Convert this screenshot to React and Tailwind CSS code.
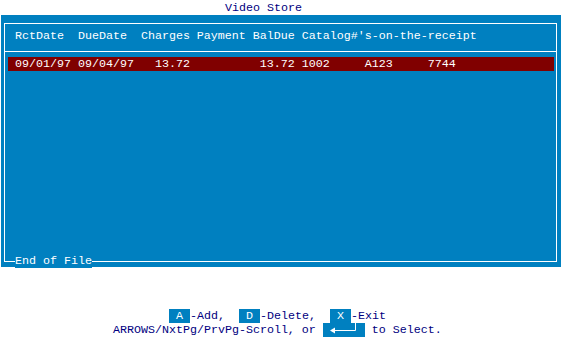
import React from 'react';

const header = "RctDate  DueDate  Charges Payment BalDue Catalog#'s-on-the-receipt";
const rows = [
  { rct: '09/01/97', due: '09/04/97', charges: '13.72', payment: '', balDue: '13.72', catalog: ['1002', 'A123', '7744'] },
];

function fmt(r) {
  const pad = (s, n) => (s + ' '.repeat(n)).slice(0, n);
  const lpad = (s, n) => (' '.repeat(n) + s).slice(-n);
  return (
    r.rct + ' ' + r.due + '   ' + pad(r.charges, 5) + ' ' + pad(r.payment, 9) + lpad(r.balDue, 5) + ' ' +
    r.catalog.map(c => pad(c, 9)).join('').trimEnd()
  );
}

function Key({ children }) {
  return <span className="bg-[#0080c0] text-white">{' ' + children + ' '}</span>;
}

function EnterKey() {
  return (
    <span className="inline-block align-top w-[42px] h-[14px] bg-[#0080c0]">
      <svg width="42" height="14" viewBox="0 0 42 14" className="block">
        <path d="M7 7.5 L12 4.5 L12 10.5 Z" fill="#fff" />
        <path d="M12 7.5 H32.5 V0" stroke="#fff" strokeWidth="1" fill="none" />
      </svg>
    </span>
  );
}

export default function App() {
  return (
    <div className="w-[561px] h-[351px] bg-white pt-[1px] overflow-hidden font-['Liberation_Mono',monospace] text-[11.667px] leading-[14px] whitespace-pre">
      <div className="h-[14px] pl-[225px] text-[#000080]">Video Store</div>

      <div className="ml-[1px] h-[252px] bg-[#0080c0] pt-[8px] pl-[3px] pr-[4px] pb-[5px]">
        <div className="relative h-full border border-white text-white">
          <div className="pt-[5px] pb-[8px] pl-[10px] h-[27px]">{header}</div>
          <div className="h-px bg-white" />
          <div className="mt-[5px] ml-[3px] mr-[2px] h-[14px] bg-[#800000] pl-[7px]">
            {rows.map((r, i) => <div key={i}>{fmt(r)}</div>)}
          </div>
          <div className="absolute left-[10px] bottom-[-7px] h-[14px] bg-[#0080c0]">End of File</div>
        </div>
      </div>

      <div className="mt-[42px] text-[#000080]">
        <div className="h-[14px] pl-[169px]">
          <Key>A</Key>-Add,  <Key>D</Key>-Delete,  <Key>X</Key>-Exit
        </div>
        <div className="h-[14px] pl-[113px]">
          ARROWS/NxtPg/PrvPg-Scroll, or <EnterKey /> to Select.
        </div>
      </div>
    </div>
  );
}
